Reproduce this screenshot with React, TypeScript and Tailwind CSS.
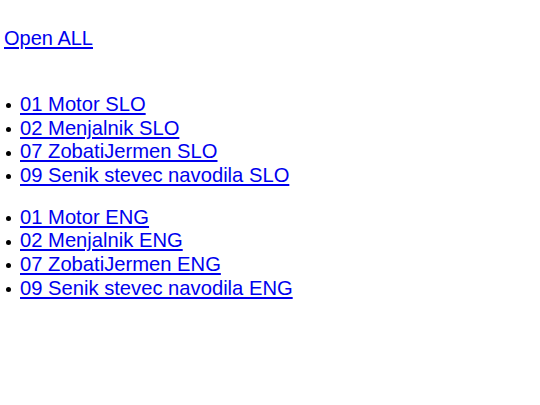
const slo = ['01 Motor SLO', '02 Menjalnik SLO', '07 ZobatiJermen SLO', '09 Senik stevec navodila SLO'];
const eng = ['01 Motor ENG', '02 Menjalnik ENG', '07 ZobatiJermen ENG', '09 Senik stevec navodila ENG'];

function LinkList({ items }: { items: string[] }) {
  return (
    <ul className="flex flex-col">
      {items.map((t) => (
        <li key={t} className="flex items-center">
          <span className="ml-[2px] mr-[9px] mt-[2px] h-[5px] w-[5px] shrink-0 rounded-full bg-black" />
          <a href="#" className="text-[#0000ee] underline text-[20.2px] underline-offset-[2px]">
            {t}
          </a>
        </li>
      ))}
    </ul>
  );
}

export default function App() {
  return (
    <div
      className="min-h-[405px] bg-white text-black text-[20px] leading-[23.6px] pl-1 pt-[26.5px]"
      style={{ fontFamily: '"Liberation Sans", Arial, sans-serif' }}
    >
      <a href="#" className="text-[#0000ee] underline underline-offset-[2px]">
        Open ALL
      </a>
      <div className="mt-[43px] flex flex-col gap-[18.4px]">
        <LinkList items={slo} />
        <LinkList items={eng} />
      </div>
    </div>
  );
}
